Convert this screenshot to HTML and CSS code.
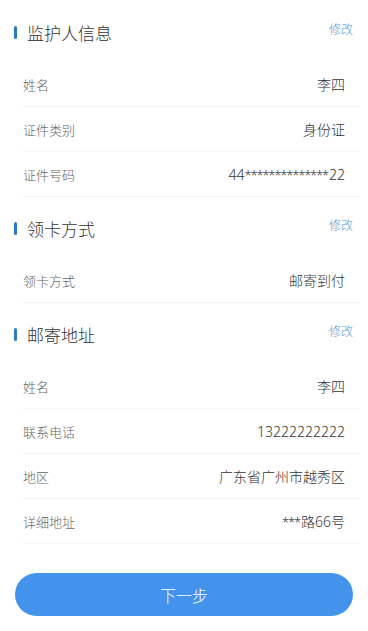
FILE: index.html
```html
<!DOCTYPE html>
<html lang="zh-CN">
<head>
<meta charset="utf-8">
<link rel="stylesheet" href="styles.css">
</head>
<body>
<div class="page">
  <section class="section first">
    <div class="sec-head">
      <span class="bar"></span>
      <span class="sec-title">监护人信息</span>
      <a class="edit">修改</a>
    </div>
    <div class="row"><span class="label">姓名</span><span class="value">李四</span></div>
    <div class="row"><span class="label">证件类别</span><span class="value">身份证</span></div>
    <div class="row"><span class="label">证件号码</span><span class="value">44<span class="stars">**************</span>22</span></div>
  </section>
  <section class="section">
    <div class="sec-head">
      <span class="bar"></span>
      <span class="sec-title">领卡方式</span>
      <a class="edit">修改</a>
    </div>
    <div class="row"><span class="label">领卡方式</span><span class="value">邮寄到付</span></div>
  </section>
  <section class="section">
    <div class="sec-head">
      <span class="bar"></span>
      <span class="sec-title">邮寄地址</span>
      <a class="edit">修改</a>
    </div>
    <div class="row"><span class="label">姓名</span><span class="value">李四</span></div>
    <div class="row"><span class="label">联系电话</span><span class="value">13222222222</span></div>
    <div class="row"><span class="label">地区</span><span class="value">广东省广州市越秀区</span></div>
    <div class="row"><span class="label">详细地址</span><span class="value"><span class="stars">***</span>路66号</span></div>
  </section>
  <button class="next">下一步</button>
</div>
</body>
</html>
```

FILE: styles.css
```css
* { box-sizing: border-box; }
html, body {
  margin: 0;
  padding: 0;
  background: #fff;
}
body {
  font-family: "Noto Sans", "Noto Sans CJK SC", sans-serif;
  font-weight: 300;
  color: #333;
}
.page {
  width: 368px;
  padding: 10px 0 0;
  display: flex;
  flex-direction: column;
}
.section { margin-top: 9px; }
.section.first { margin-top: 0; }
.sec-head {
  height: 44px;
  display: flex;
  align-items: center;
  padding: 0 15px 0 14px;
  margin-bottom: 8px;
}
.bar {
  width: 3px;
  height: 13px;
  background: #2b7cc4;
  border-radius: 1.5px;
  margin-right: 10px;
}
.sec-title {
  font-size: 17px;
  color: #333;
  flex: 1;
}
.edit {
  font-size: 12px;
  color: #5a9ad2;
  align-self: flex-start;
  margin-top: 12px;
  line-height: 16px;
}
.row {
  height: 45px;
  display: flex;
  align-items: center;
  justify-content: space-between;
  margin: 0 8px 0 23px;
  padding-right: 15px;
  border-bottom: 1px solid #f3f3f3;
}
.label {
  font-size: 13px;
  color: #666;
}
.value {
  font-size: 14px;
  color: #333;
}
.stars {
  font-size: 13px;
  letter-spacing: -1.2px;
  margin-right: 1px;
}
.next {
  margin: 29px 15px 0;
  height: 43px;
  border: none;
  border-radius: 22px;
  background: #4393ec;
  color: #fff;
  font-family: "Noto Sans", "Noto Sans CJK SC", sans-serif;
  font-weight: 300;
  font-size: 16px;
}
```
